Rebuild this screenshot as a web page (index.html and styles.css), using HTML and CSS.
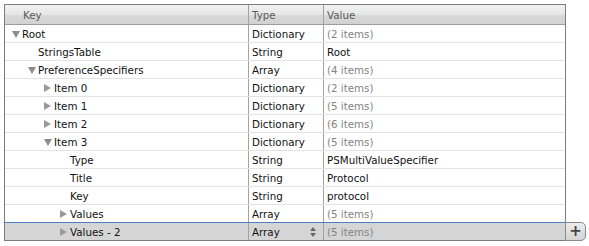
FILE: index.html
```html
<!DOCTYPE html>
<html lang="en">
<head>
    <meta charset="UTF-8">
    <title>Root.plist</title>
    <link rel="stylesheet" href="styles.css">
</head>
<body>
    <div class="outline">
        <div class="head">
            <div class="cell key">Key</div>
            <div class="cell type">Type</div>
            <div class="cell value">Value</div>
        </div>
        <div class="row">
            <div class="cell key lvl0"><span class="tri open"></span>Root</div>
            <div class="cell type">Dictionary</div>
            <div class="cell value muted">(2 items)</div>
        </div>
        <div class="row">
            <div class="cell key lvl1"><span class="tri"></span>StringsTable</div>
            <div class="cell type">String</div>
            <div class="cell value">Root</div>
        </div>
        <div class="row">
            <div class="cell key lvl1"><span class="tri open"></span>PreferenceSpecifiers</div>
            <div class="cell type">Array</div>
            <div class="cell value muted">(4 items)</div>
        </div>
        <div class="row">
            <div class="cell key lvl2"><span class="tri closed"></span>Item 0</div>
            <div class="cell type">Dictionary</div>
            <div class="cell value muted">(2 items)</div>
        </div>
        <div class="row">
            <div class="cell key lvl2"><span class="tri closed"></span>Item 1</div>
            <div class="cell type">Dictionary</div>
            <div class="cell value muted">(5 items)</div>
        </div>
        <div class="row">
            <div class="cell key lvl2"><span class="tri closed"></span>Item 2</div>
            <div class="cell type">Dictionary</div>
            <div class="cell value muted">(6 items)</div>
        </div>
        <div class="row">
            <div class="cell key lvl2"><span class="tri open"></span>Item 3</div>
            <div class="cell type">Dictionary</div>
            <div class="cell value muted">(5 items)</div>
        </div>
        <div class="row">
            <div class="cell key lvl3"><span class="tri"></span>Type</div>
            <div class="cell type">String</div>
            <div class="cell value">PSMultiValueSpecifier</div>
        </div>
        <div class="row">
            <div class="cell key lvl3"><span class="tri"></span>Title</div>
            <div class="cell type">String</div>
            <div class="cell value">Protocol</div>
        </div>
        <div class="row">
            <div class="cell key lvl3"><span class="tri"></span>Key</div>
            <div class="cell type">String</div>
            <div class="cell value">protocol</div>
        </div>
        <div class="row">
            <div class="cell key lvl3"><span class="tri closed"></span>Values</div>
            <div class="cell type">Array</div>
            <div class="cell value muted">(5 items)</div>
        </div>
        <div class="row sel">
            <div class="cell key lvl3"><span class="tri closed"></span>Values - 2</div>
            <div class="cell type">Array<span class="stepper"><i class="up"></i><i class="down"></i></span></div>
            <div class="cell value muted">(5 items)</div>
            <div class="add">+</div>
        </div>
    </div>
</body>
</html>
```

FILE: styles.css
```css
body {
    margin: 0;
    padding: 4px;
    background-color: white;
    font-family: "DejaVu Sans", sans-serif;
    font-size: 10.3px;
    color: #111;
}
.outline {
    width: 560px;
    border: 1px solid #7c7c7c;
}
.head, .row {
    display: grid;
    grid-template-columns: 244px 75px 1fr;
}
.head {
    height: 19px;
    background: linear-gradient(#f1f1f1, #e6e6e6 50%, #d9d9d9 51%, #d2d2d2);
    color: #5a5a5a;
}
.row {
    position: relative;
    height: 18px;
    box-sizing: border-box;
    border-top: 1px solid #e3e3e3;
}
.head + .row {
    border-top-color: #9c9c9c;
}
.cell {
    display: flex;
    align-items: center;
    padding-left: 3px;
    border-right: 1px solid #a3a3a3;
    white-space: nowrap;
}
.cell.value {
    border-right: none;
}
.head .key {
    padding-left: 18px;
}
.lvl0 { padding-left: 7px; }
.lvl1 { padding-left: 23px; }
.lvl2 { padding-left: 39px; }
.lvl3 { padding-left: 55px; }
.tri {
    display: inline-block;
    width: 10px;
    height: 8px;
    position: relative;
}
.tri.open::before, .tri.closed::before {
    content: "";
    position: absolute;
    left: 0;
    width: 0;
    height: 0;
}
.tri.open::before {
    top: 1px;
    border-top: 7px solid #8c8c8c;
    border-left: 4px solid transparent;
    border-right: 4px solid transparent;
}
.tri.closed::before {
    top: 0;
    border-left: 7px solid #9a9a9a;
    border-top: 4px solid transparent;
    border-bottom: 4px solid transparent;
}
.muted {
    color: #838383;
}
.sel {
    background-color: #d5d5d5;
    border-top-color: #4d7fc7;
}
.stepper {
    display: flex;
    flex-direction: column;
    gap: 2px;
    margin-left: auto;
    margin-right: 7px;
}
.stepper i {
    display: block;
    width: 0;
    height: 0;
    border-left: 3px solid transparent;
    border-right: 3px solid transparent;
}
.stepper .up {
    border-bottom: 4px solid #666;
}
.stepper .down {
    border-top: 4px solid #666;
}
.add {
    position: absolute;
    left: 100%;
    top: -1px;
    width: 19px;
    height: 17px;
    border: 1px solid #8a8a8a;
    border-radius: 0 5px 5px 0;
    background: linear-gradient(#ececec, #d4d4d4);
    color: #444;
    font-size: 15px;
    font-weight: bold;
    line-height: 16px;
    text-align: center;
}
```
